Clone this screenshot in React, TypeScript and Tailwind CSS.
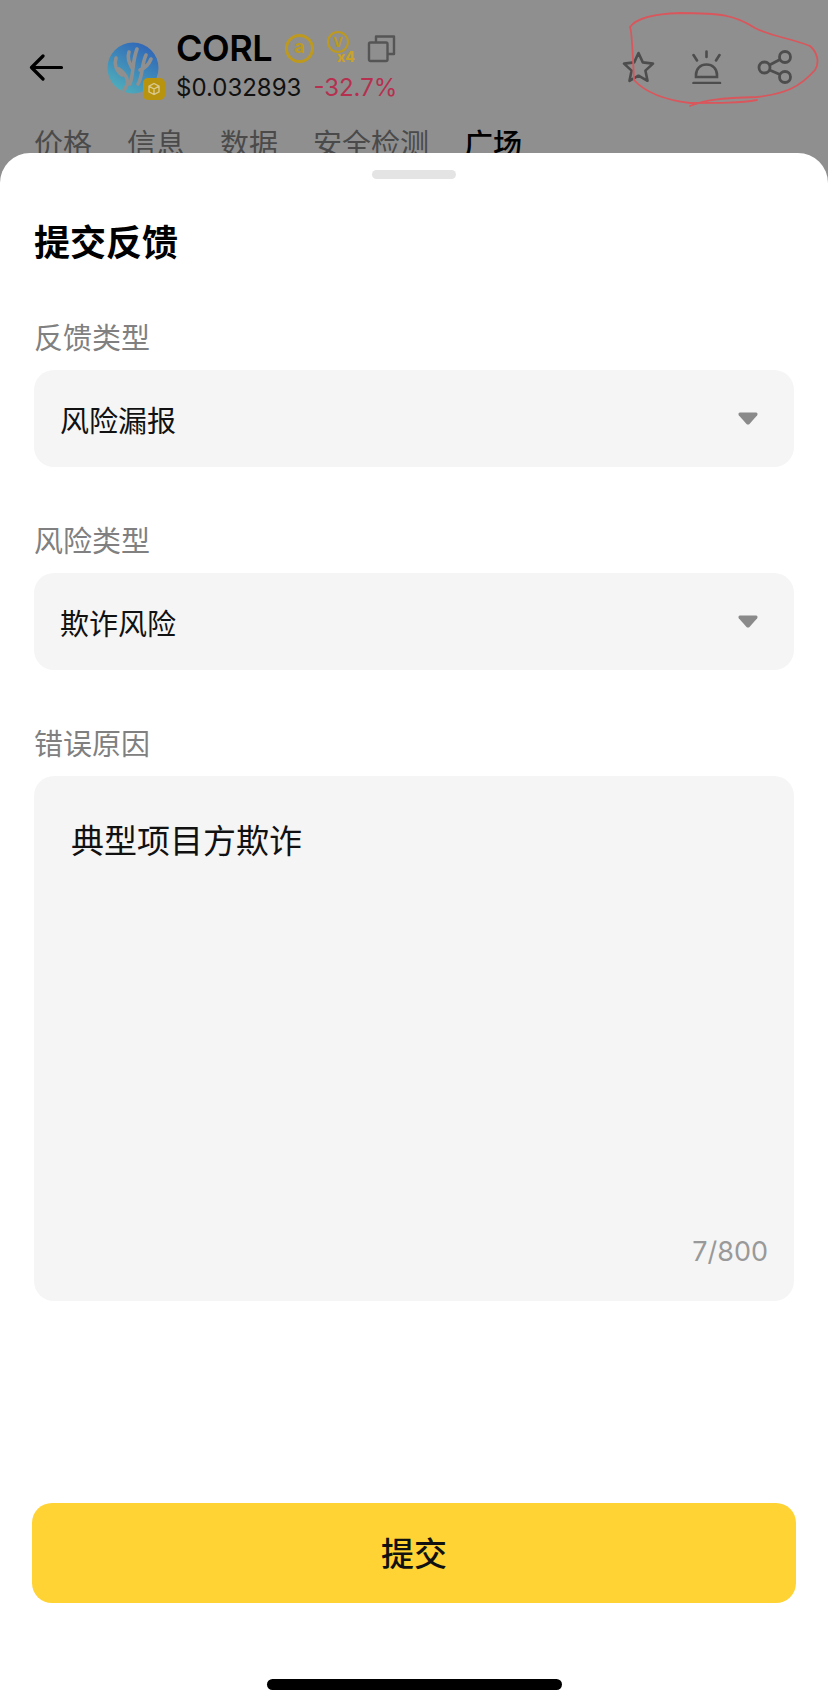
import { ChevronDown } from 'lucide-react';

const CJK = "font-['Noto_Sans_CJK_SC','Noto_Sans',sans-serif]";
const TABS = ['价格', '信息', '数据', '安全检测'];

function Logo() {
    return (
        <div className="relative w-[59px] h-[59px] mt-[1px] shrink-0">
            <svg width="52" height="52" viewBox="0 0 52 52" fill="none">
                <defs>
                    <linearGradient id="coin" x1="0.8" y1="0" x2="0.2" y2="1">
                        <stop offset="0" stopColor="#2f63b8" />
                        <stop offset="1" stopColor="#4fb0bb" />
                    </linearGradient>
                </defs>
                <circle cx="26" cy="26" r="25.5" fill="url(#coin)" />
                <path
                    d="M17 48C24 40 19 32 12 27M23 42C27 30 25 20 30 7M31 42C36 34 34 24 39 13M25 26C22 20 20 16 22 10M33 28C38 26 42 22 44 17M15 33C9 29 7 22 9 16"
                    stroke="#8f8f8f"
                    strokeWidth="3.6"
                    strokeLinecap="round"
                />
            </svg>
            <div className="absolute left-[36px] top-[36px] w-[22px] h-[22px] rounded-[5px] bg-[#b8930e] flex items-center justify-center">
                <svg width="14" height="14" viewBox="0 0 14 14" fill="none" stroke="#d9c98c" strokeWidth="1.4">
                    <path d="M7 1.5L12 4.2V9.8L7 12.5L2 9.8V4.2L7 1.5ZM2 4.2L7 7L12 4.2M7 7V12.5" />
                </svg>
            </div>
        </div>
    );
}

function Header() {
    return (
        <div className="h-[153px] overflow-hidden shrink-0">
            <div className="flex h-[122px]">
                <svg className="ml-[29px] mt-[54px] shrink-0" width="35" height="27" viewBox="0 0 35 27" fill="none" stroke="#000" strokeWidth="3.2" strokeLinecap="round" strokeLinejoin="round">
                    <path d="M32.5 13.5H3M14 2L2.5 13.5L14 25" />
                </svg>
                <div className="ml-[43px] mt-[41px]">
                    <Logo />
                </div>
                <div className="ml-[10px] mt-[29px] font-['Inter',sans-serif]">
                    <div className="flex items-center h-[38px]">
                        <span className="text-[36px] leading-[38px] font-semibold text-black tracking-[-0.5px]">CORL</span>
                        <div className="ml-[13px] w-[29px] h-[29px] rounded-full border-[3px] border-[#bd9a1f] flex items-center justify-center">
                            <span className="text-[18px] leading-none font-bold text-[#bd9a1f] -mt-[3px]">a</span>
                        </div>
                        <div className="relative ml-[13px] w-[30px] h-[30px] -mt-[4px]">
                            <div className="w-[22px] h-[22px] rounded-full border-[2.5px] border-[#bd9a1f] flex items-center justify-center">
                                <span className="text-[13px] leading-none font-bold text-[#bd9a1f]">V</span>
                            </div>
                            <span className="absolute left-[10px] top-[19px] text-[14px] leading-none font-extrabold text-[#c9a227]">x4</span>
                        </div>
                        <svg className="ml-[10px]" width="29" height="29" viewBox="0 0 29 29" fill="none" stroke="#555" strokeWidth="2.4" strokeLinejoin="round">
                            <path d="M9 8V2.5H27V20H20.5" />
                            <rect x="2" y="8.5" width="18.5" height="18.5" rx="1.5" />
                        </svg>
                    </div>
                    <div className="flex items-center mt-[6px] text-[24px] leading-[30px]">
                        <span className="text-[#111]">$0.032893</span>
                        <span className="ml-[12px] text-[#b5304f]">-32.7%</span>
                    </div>
                </div>
                <div className="relative flex-1">
                    <Actions />
                </div>
            </div>
            <div className={`flex gap-[35px] pl-[34px] text-[29px] leading-[40px] text-[#4a4a4a] ${CJK}`}>
                {TABS.map(tab => (
                    <span key={tab}>{tab}</span>
                ))}
                <span className="font-medium text-black">广场</span>
            </div>
        </div>
    );
}

function Actions() {
    return (
        <div className="flex justify-end items-start pt-[50px] pr-[35px] gap-[35px]">
            <svg width="35" height="34" viewBox="0 0 35 34" fill="none" stroke="#4d4d4d" strokeWidth="2.6" strokeLinejoin="round">
                <path d="M17.5 3L21.8 12.4L32 13.6L24.4 20.6L26.5 30.8L17.5 25.7L8.5 30.8L10.6 20.6L3 13.6L13.2 12.4L17.5 3Z" />
            </svg>
            <svg width="31" height="34" viewBox="0 0 31 34" fill="none" stroke="#4d4d4d" strokeWidth="2.6" strokeLinecap="round">
                <path d="M15.5 1.5V7M2.5 5L6 10.5M28.5 5L25 10.5M5 27V25C5 18.5 9.5 14.5 15.5 14.5C21.5 14.5 26 18.5 26 25V27H5ZM2.5 33H29" />
            </svg>
            <svg width="36" height="34" viewBox="0 0 36 34" fill="none" stroke="#4d4d4d" strokeWidth="2.8">
                <circle cx="7.5" cy="17.5" r="5.5" />
                <circle cx="28" cy="7" r="5.5" />
                <circle cx="28" cy="27" r="5.5" />
                <path d="M12.5 15L23 9.5M12.5 20L23 24.5" />
            </svg>
        </div>
    );
}

function Field({ label, value }: { label: string; value: string }) {
    return (
        <>
            <div className="text-[29px] leading-[40px] text-[#808080]">{label}</div>
            <div className="mt-[14px] h-[97px] rounded-[20px] bg-[#f5f5f5] flex items-center justify-between pl-[26px] pr-[36px] mb-[52px]">
                <span className="text-[29px] leading-[40px] text-[#111]">{value}</span>
                <svg width="20" height="13" viewBox="0 0 20 13" fill="#8a8a8a">
                    <path d="M2 0.5H18C19.5 0.5 20 2 19.2 3.2L11.5 12C10.7 12.8 9.3 12.8 8.5 12L0.8 3.2C0 2 0.5 0.5 2 0.5Z" />
                </svg>
            </div>
        </>
    );
}

export default function App() {
    return (
        <div className={`relative w-[828px] h-[1705px] overflow-hidden bg-[#8f8f8f] flex flex-col ${CJK}`}>
            <Header />
            <div className="flex-1 bg-white rounded-t-[30px] px-[34px] pt-[17px] flex flex-col">
                <div className="self-center w-[84px] h-[9px] rounded-full bg-[#e4e4e4]" />
                <h1 className="mt-[39px] text-[36px] leading-[44px] font-bold text-black">提交反馈</h1>
                <div className="h-[54px]" />
                <Field label="反馈类型" value="风险漏报" />
                <Field label="风险类型" value="欺诈风险" />
                <div className="text-[29px] leading-[40px] text-[#808080]">错误原因</div>
                <div className="mt-[14px] h-[525px] rounded-[20px] bg-[#f5f5f5] pl-[37px] pr-[26px] pt-[43px] pb-[33px] flex flex-col justify-between">
                    <span className="text-[33px] leading-[40px] text-[#111]">典型项目方欺诈</span>
                    <span className="self-end text-[27px] leading-[32px] text-[#999] font-['Inter',sans-serif]">7/800</span>
                </div>
                <button className="mt-[202px] -mx-[2px] h-[100px] rounded-[20px] bg-[#ffd333] text-[33px] font-medium text-[#111]">提交</button>
                <div className="mt-[76px] self-center w-[295px] h-[11px] rounded-full bg-black" />
            </div>
            <svg className="absolute left-0 top-0 pointer-events-none" width="828" height="153" viewBox="0 0 828 153" fill="none" stroke="#d9575c" strokeWidth="1.8" strokeLinecap="round" strokeLinejoin="round">
                <path d="M690 106C705 100 720 98 757 97C785 94 800 87 815 70C820 62 817 52 810 46C790 38 770 36 755 28C735 15 720 13 680 13C650 14 635 20 630 27C632 30 633 60 634 80C645 92 665 100 690 103C720 103 740 103 757 100" />
            </svg>
        </div>
    );
}
